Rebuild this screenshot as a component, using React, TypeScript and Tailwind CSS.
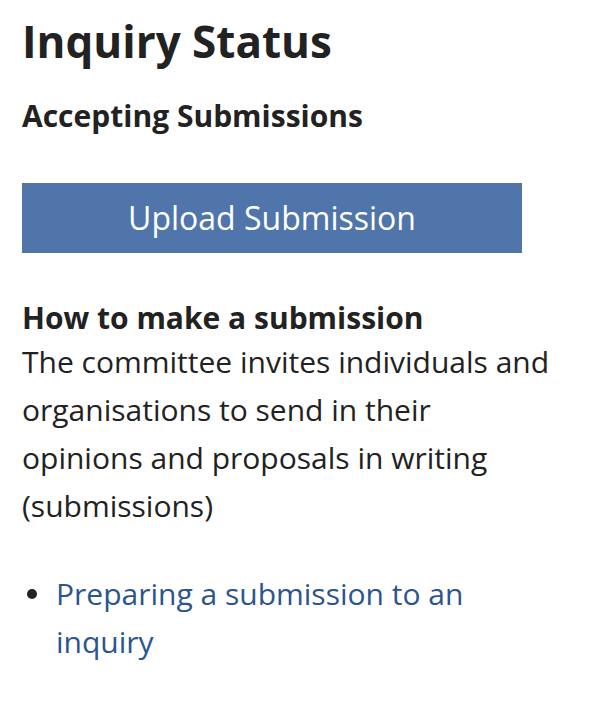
import React from "react";

export default function App() {
  return (
    <div className="min-h-[710px] w-[616px] bg-white text-[#222222]" style={{ fontFamily: '"Open Sans", sans-serif' }}>
      <div className="w-[550px] pl-[22px] pt-[13px]">
        <h2 className="text-[44px] font-bold leading-[56px]">Inquiry Status</h2>
        <h3 className="mt-[27px] text-[30px] font-bold leading-[40px]">Accepting Submissions</h3>
        <div className="mt-[47px]">
          <a className="flex h-[70px] w-[500px] items-center justify-center bg-[#5075aa] text-[32px] text-white">Upload Submission</a>
        </div>
        <div className="mt-[45px] text-[30px]">
          <p className="font-bold leading-[40px]">How to make a submission</p>
          <p className="leading-[48px]">The committee invites individuals and organisations to send in their opinions and proposals in writing (submissions)</p>
        </div>
        <ul className="mt-[40px] text-[30px] leading-[48px] text-[#2c5590]">
          <li className="flex">
            <span className="flex w-[34px] shrink-0 pt-[19px] pl-[5px]">
              <span className="h-[10px] w-[10px] rounded-full bg-[#222222]" />
            </span>
            <span>Preparing a submission to an inquiry</span>
          </li>
        </ul>
      </div>
    </div>
  );
}
